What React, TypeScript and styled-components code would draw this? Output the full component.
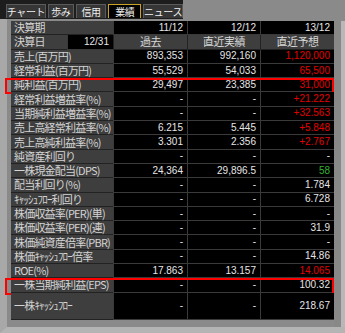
import styled, { createGlobalStyle } from 'styled-components';

const Global = createGlobalStyle`
  html, body { margin: 0; padding: 0; background: #8c8c8c; }
  * { box-sizing: border-box; }
`;

const Screen = styled.div`
  width: 345px;
  height: 333px;
  background: #8a8a8a;
  display: flex;
  flex-direction: column;
  overflow: hidden;
  font-family: 'Noto Sans CJK JP', 'Liberation Sans', sans-serif;
  line-height: 1;
`;

const TopBar = styled.div`
  display: flex;
  height: 19px;
`;

const TabStrip = styled.div`
  display: flex;
  gap: 2px;
  width: 183px;
  padding: 4px 0 0 6px;
  background: #1d1d1d;
`;

const Tab = styled.div<{ $w: number; $active?: boolean }>`
  width: ${(p) => p.$w}px;
  height: 14px;
  display: flex;
  align-items: center;
  justify-content: center;
  font-size: 10px;
  letter-spacing: -0.4px;
  white-space: nowrap;
  color: #f0f0f0;
  background: ${(p) => (p.$active ? '#000' : '#363636')};
  border: 1px solid ${(p) => (p.$active ? '#c9a227' : '#5a5a5a')};
  border-bottom: none;
`;

const Body = styled.div`
  display: flex;
  flex: 1;
  padding: 2px 0 0 0;
  border-left: 7px solid #a8a8a8;
  border-bottom: 6px solid #b4b4b4;
`;

const Inner = styled.div`
  flex: 1;
  padding-left: 4px;
  display: flex;
  align-items: flex-start;
`;

const Table = styled.div`
  width: 323px;
  display: flex;
  flex-direction: column;
  background: #000;
  border-right: 1px solid #1a1a1a;
`;

const RightFrame = styled.div`
  width: 11px;
  align-self: stretch;
  background: #888;
  border-right: 4px solid #b8b8b8;
`;

const Row = styled.div<{ $h?: number; $cols?: string; $mark?: boolean }>`
  position: relative;
  display: grid;
  grid-template-columns: ${(p) => p.$cols ?? '102px 74px 73px 74px'};
  height: ${(p) => p.$h ?? 14.3}px;

  ${(p) =>
    p.$mark &&
    `&::after {
      content: '';
      position: absolute;
      left: -6px;
      right: -1px;
      top: 0;
      bottom: -2px;
      border: 2px solid #f00;
      pointer-events: none;
    }`}
`;

const Label = styled.div`
  display: flex;
  align-items: center;
  padding-left: 3px;
  background: #3e3e3e;
  color: #d4d4d4;
  font-size: 11px;
  letter-spacing: -0.8px;
  white-space: nowrap;
  border-bottom: 1px solid #222;
`;

const Head = styled.div`
  display: flex;
  align-items: center;
  justify-content: center;
  background: #3e3e3e;
  color: #d8d8d8;
  font-size: 11px;
  letter-spacing: -0.5px;
  white-space: nowrap;
  border-left: 1px solid #222;
  border-bottom: 1px solid #222;
`;

const Value = styled.div<{ $tone?: 'red' | 'green' }>`
  display: flex;
  align-items: center;
  justify-content: flex-end;
  padding-right: 4px;
  background: #000;
  color: ${(p) => (p.$tone === 'red' ? '#e40000' : p.$tone === 'green' ? '#33b033' : '#e6e6e6')};
  font-family: 'Liberation Sans', sans-serif;
  font-size: 10px;
  white-space: nowrap;
  border-left: 1px solid #3a3a3a;
  border-bottom: 1px solid #3a3a3a;
`;

type Tone = 'red' | 'green' | undefined;
type Line = { label: string; v: [string, string, string]; tone?: Tone; mark?: boolean; h?: number };

const D = '-';

const rows: Line[] = [
  { label: '売上(百万円)', v: ['893,353', '992,160', '1,120,000'], tone: 'red' },
  { label: '経常利益(百万円)', v: ['55,529', '54,033', '65,500'], tone: 'red' },
  { label: '純利益(百万円)', v: ['29,497', '23,385', '31,000'], tone: 'red', mark: true },
  { label: '経常利益増益率(%)', v: [D, D, '+21.222'], tone: 'red' },
  { label: '当期純利益増益率(%)', v: [D, D, '+32.563'], tone: 'red' },
  { label: '売上高経常利益率(%)', v: ['6.215', '5.445', '+5.848'], tone: 'red' },
  { label: '売上高純利益率(%)', v: ['3.301', '2.356', '+2.767'], tone: 'red' },
  { label: '純資産利回り', v: [D, D, D] },
  { label: '一株現金配当(DPS)', v: ['24,364', '29,896.5', '58'], tone: 'green' },
  { label: '配当利回り(%)', v: [D, D, '1.784'] },
  { label: 'ｷｬｯｼｭﾌﾛｰ利回り', v: [D, D, '6.728'] },
  { label: '株価収益率(PER)(単)', v: [D, D, D] },
  { label: '株価収益率(PER)(連)', v: [D, D, '31.9'] },
  { label: '株価純資産倍率(PBR)', v: [D, D, D] },
  { label: '株価ｷｬｯｼｭﾌﾛｰ倍率', v: [D, D, '14.86'] },
  { label: 'ROE(%)', v: ['17.863', '13.157', '14.065'], tone: 'red' },
  { label: '一株当期純利益(EPS)', v: [D, D, '100.32'], mark: true },
  { label: '一株ｷｬｯｼｭﾌﾛｰ', v: [D, D, '218.67'], h: 27.3 },
];

export default function App() {
  return (
    <Screen>
      <Global />
      <TopBar>
        <TabStrip>
          <Tab $w={40}>チャート</Tab>
          <Tab $w={26}>歩み</Tab>
          <Tab $w={31}>信用</Tab>
          <Tab $w={33} $active>業績</Tab>
          <Tab $w={40}>ニュース</Tab>
        </TabStrip>
      </TopBar>
      <Body>
        <Inner>
          <Table>
            <Row>
              <Label>決算期</Label>
              <Value>11/12</Value>
              <Value>12/12</Value>
              <Value>13/12</Value>
            </Row>
            <Row $cols="56px 46px 74px 73px 74px">
              <Label>決算日</Label>
              <Value>12/31</Value>
              <Head>過去</Head>
              <Head>直近実績</Head>
              <Head>直近予想</Head>
            </Row>
            {rows.map((r) => (
              <Row key={r.label} $h={r.h} $mark={r.mark}>
                <Label>{r.label}</Label>
                <Value>{r.v[0]}</Value>
                <Value>{r.v[1]}</Value>
                <Value $tone={r.v[2] === D ? undefined : r.tone}>{r.v[2]}</Value>
              </Row>
            ))}
          </Table>
          <RightFrame />
        </Inner>
      </Body>
    </Screen>
  );
}
